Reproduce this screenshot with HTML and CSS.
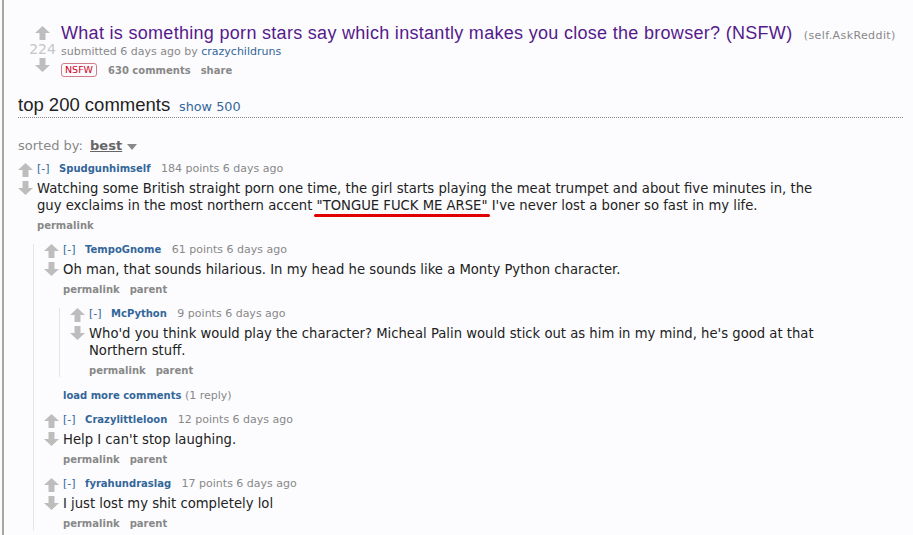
FILE: index.html
```html
<!DOCTYPE html>
<html lang="en">
<head>
    <meta charset="UTF-8">
    <title>What is something porn stars say which instantly makes you close the browser? (NSFW)</title>
    <link rel="stylesheet" href="styles.css">
</head>
<body>
    <div class="page">
        <div class="link">
            <div class="midcol">
                <svg class="arrow" viewBox="0 0 15 14"><path d="M7.5 0 L15 7 H10.5 V14 H4.5 V7 H0 Z"/></svg>
                <div class="score">224</div>
                <svg class="arrow" viewBox="0 0 15 14"><path d="M7.5 14 L15 7 H10.5 V0 H4.5 V7 H0 Z"/></svg>
            </div>
            <div class="entry">
                <p class="title"><a href="#">What is something porn stars say which instantly makes you close the browser? (NSFW)</a> <span class="domain">(self.AskReddit)</span></p>
                <p class="tagline">submitted 6 days ago by <a href="#">crazychildruns</a></p>
                <ul class="buttons">
                    <li><span class="nsfw">NSFW</span></li>
                    <li><a href="#">630 comments</a></li>
                    <li><a href="#">share</a></li>
                </ul>
            </div>
        </div>

        <div class="pane-title">
            <span class="big">top 200 comments</span>
            <a href="#">show 500</a>
        </div>

        <div class="menuarea">
            sorted by: <span class="selected">best</span><span class="caret"></span>
        </div>

        <div class="comments">
            <div class="comment">
                <div class="midcol">
                    <svg class="arrow" viewBox="0 0 15 14"><path d="M7.5 0 L15 7 H10.5 V14 H4.5 V7 H0 Z"/></svg>
                    <svg class="arrow" viewBox="0 0 15 14"><path d="M7.5 14 L15 7 H10.5 V0 H4.5 V7 H0 Z"/></svg>
                </div>
                <div class="entry">
                    <p class="tagline"><a href="#" class="toggle">[-]</a> <a href="#" class="author">Spudgunhimself</a> 184 points 6 days ago</p>
                    <div class="md">Watching some British straight porn one time, the girl starts playing the meat trumpet and about five minutes in, the guy exclaims in the most northern accent <span class="marked">"TONGUE FUCK ME ARSE"</span> I've never lost a boner so fast in my life.</div>
                    <ul class="buttons"><li><a href="#">permalink</a></li></ul>
                </div>
                <div class="child">
                    <div class="comment">
                        <div class="midcol">
                            <svg class="arrow" viewBox="0 0 15 14"><path d="M7.5 0 L15 7 H10.5 V14 H4.5 V7 H0 Z"/></svg>
                            <svg class="arrow" viewBox="0 0 15 14"><path d="M7.5 14 L15 7 H10.5 V0 H4.5 V7 H0 Z"/></svg>
                        </div>
                        <div class="entry">
                            <p class="tagline"><a href="#" class="toggle">[-]</a> <a href="#" class="author">TempoGnome</a> 61 points 6 days ago</p>
                            <div class="md">Oh man, that sounds hilarious. In my head he sounds like a Monty Python character.</div>
                            <ul class="buttons"><li><a href="#">permalink</a></li><li><a href="#">parent</a></li></ul>
                        </div>
                        <div class="child">
                            <div class="comment">
                                <div class="midcol">
                                    <svg class="arrow" viewBox="0 0 15 14"><path d="M7.5 0 L15 7 H10.5 V14 H4.5 V7 H0 Z"/></svg>
                                    <svg class="arrow" viewBox="0 0 15 14"><path d="M7.5 14 L15 7 H10.5 V0 H4.5 V7 H0 Z"/></svg>
                                </div>
                                <div class="entry">
                                    <p class="tagline"><a href="#" class="toggle">[-]</a> <a href="#" class="author">McPython</a> 9 points 6 days ago</p>
                                    <div class="md">Who'd you think would play the character? Micheal Palin would stick out as him in my mind, he's good at that Northern stuff.</div>
                                    <ul class="buttons"><li><a href="#">permalink</a></li><li><a href="#">parent</a></li></ul>
                                </div>
                            </div>
                        </div>
                        <p class="morecomments"><a href="#">load more comments</a> (1 reply)</p>
                    </div>
                    <div class="comment">
                        <div class="midcol">
                            <svg class="arrow" viewBox="0 0 15 14"><path d="M7.5 0 L15 7 H10.5 V14 H4.5 V7 H0 Z"/></svg>
                            <svg class="arrow" viewBox="0 0 15 14"><path d="M7.5 14 L15 7 H10.5 V0 H4.5 V7 H0 Z"/></svg>
                        </div>
                        <div class="entry">
                            <p class="tagline"><a href="#" class="toggle">[-]</a> <a href="#" class="author">Crazylittleloon</a> 12 points 6 days ago</p>
                            <div class="md">Help I can't stop laughing.</div>
                            <ul class="buttons"><li><a href="#">permalink</a></li><li><a href="#">parent</a></li></ul>
                        </div>
                    </div>
                    <div class="comment">
                        <div class="midcol">
                            <svg class="arrow" viewBox="0 0 15 14"><path d="M7.5 0 L15 7 H10.5 V14 H4.5 V7 H0 Z"/></svg>
                            <svg class="arrow" viewBox="0 0 15 14"><path d="M7.5 14 L15 7 H10.5 V0 H4.5 V7 H0 Z"/></svg>
                        </div>
                        <div class="entry">
                            <p class="tagline"><a href="#" class="toggle">[-]</a> <a href="#" class="author">fyrahundraslag</a> 17 points 6 days ago</p>
                            <div class="md">I just lost my shit completely lol</div>
                            <ul class="buttons"><li><a href="#">permalink</a></li><li><a href="#">parent</a></li></ul>
                        </div>
                    </div>
                </div>
            </div>
        </div>
    </div>
</body>
</html>
```

FILE: styles.css
```css
html, body {
    margin: 0;
    height: 100%;
}

body {
    font-family: "DejaVu Sans", Verdana, sans-serif;
    font-size: 10px;
    color: #222;
    background-color: #fcfcfe;
    padding-left: 2px;
    box-sizing: border-box;
    overflow: hidden;
}

a {
    text-decoration: none;
    color: #369;
}

p {
    margin: 0;
}

ul {
    list-style: none;
    margin: 0;
    padding: 0;
}

.page {
    border-left: 2px solid #a9a99b;
    min-height: 100%;
    padding: 0 10px 0 14px;
}

/* link header */

.link {
    display: flex;
    padding-top: 22px;
}

.link .midcol {
    width: 37px;
    padding-left: 8px;
    margin-left: -2px;
    display: flex;
    flex-direction: column;
    align-items: center;
    padding-top: 4px;
}

.arrow {
    width: 15px;
    height: 14px;
    display: block;
    fill: #bdbdbd;
}

.score {
    font-size: 14px;
    line-height: 14px;
    color: #c6c6c6;
    margin: 2px 0 2px;
}

.link .title {
    font-family: "Liberation Sans", Arial, sans-serif;
    font-size: 18px;
    letter-spacing: 0.3px;
    line-height: 22px;
}

.link .title a {
    color: #551a8b;
}

.domain {
    font-family: "DejaVu Sans", Verdana, sans-serif;
    font-size: 11px;
    letter-spacing: 0.4px;
    color: #888;
    margin-left: 6px;
}

.link .tagline {
    color: #888;
    font-size: 11px;
    line-height: 12px;
    margin-top: -1px;
}

.link .buttons {
    margin-top: 5px;
}

.buttons {
    display: flex;
    align-items: center;
    gap: 10px;
}

.buttons a {
    color: #888;
    font-weight: bold;
}

.nsfw {
    display: inline-block;
    color: #d10023;
    border: 1px solid #d27b8a;
    border-radius: 3px;
    padding: 0 3px;
    line-height: 12px;
    font-size: 9.5px;
    margin-right: 1px;
}

/* comment area title */

.pane-title {
    margin-top: 17px;
    padding-bottom: 1px;
    border-bottom: 1px dotted #888;
    font-family: "Liberation Sans", Arial, sans-serif;
}

.pane-title .big {
    font-size: 18.5px;
    line-height: 22px;
    color: #222;
}

.pane-title a {
    font-family: "DejaVu Sans", Verdana, sans-serif;
    font-size: 12.8px;
    margin-left: 6px;
}

.menuarea {
    margin-top: 20px;
    font-size: 13px;
    line-height: 16px;
    color: #888;
}

.menuarea .selected {
    color: #666;
    font-weight: bold;
    text-decoration: underline;
    margin-left: 3px;
}

.caret {
    display: inline-block;
    border: 5px solid transparent;
    border-top: 6px solid #888;
    border-bottom: 0;
    margin-left: 5px;
    vertical-align: middle;
}

/* comments */

.comments {
    margin-top: 9px;
}

.comment {
    display: grid;
    grid-template-columns: 19px 1fr;
    margin-bottom: 12px;
}

.comment .midcol {
    display: flex;
    flex-direction: column;
    gap: 4px;
}

.comment .tagline {
    color: #888;
    font-size: 11px;
    line-height: 12px;
}

.tagline .author {
    font-size: 10px;
    font-weight: bold;
    margin-left: 6px;
    margin-right: 7px;
}

.md {
    font-size: 13.2px;
    line-height: 17px;
    max-width: 785px;
    margin-top: 5px;
}

.marked {
    position: relative;
}

.marked::after {
    content: "";
    position: absolute;
    left: -3px;
    right: -2px;
    bottom: -4px;
    height: 3px;
    border-radius: 2px;
    background: #e00000;
}

.comment .buttons {
    margin-top: 6px;
    line-height: 12px;
}

.child {
    grid-column: 2;
    margin-left: -4px;
    margin-top: 12px;
    padding-left: 10px;
    border-left: 1px solid #e4e4ea;
}

.child .comment:last-child {
    margin-bottom: 0;
}

.morecomments {
    grid-column: 2;
    color: #888;
    font-size: 11px;
    line-height: 12px;
    margin-top: 13px;
}

.morecomments a {
    font-size: 10px;
    font-weight: bold;
}
```
